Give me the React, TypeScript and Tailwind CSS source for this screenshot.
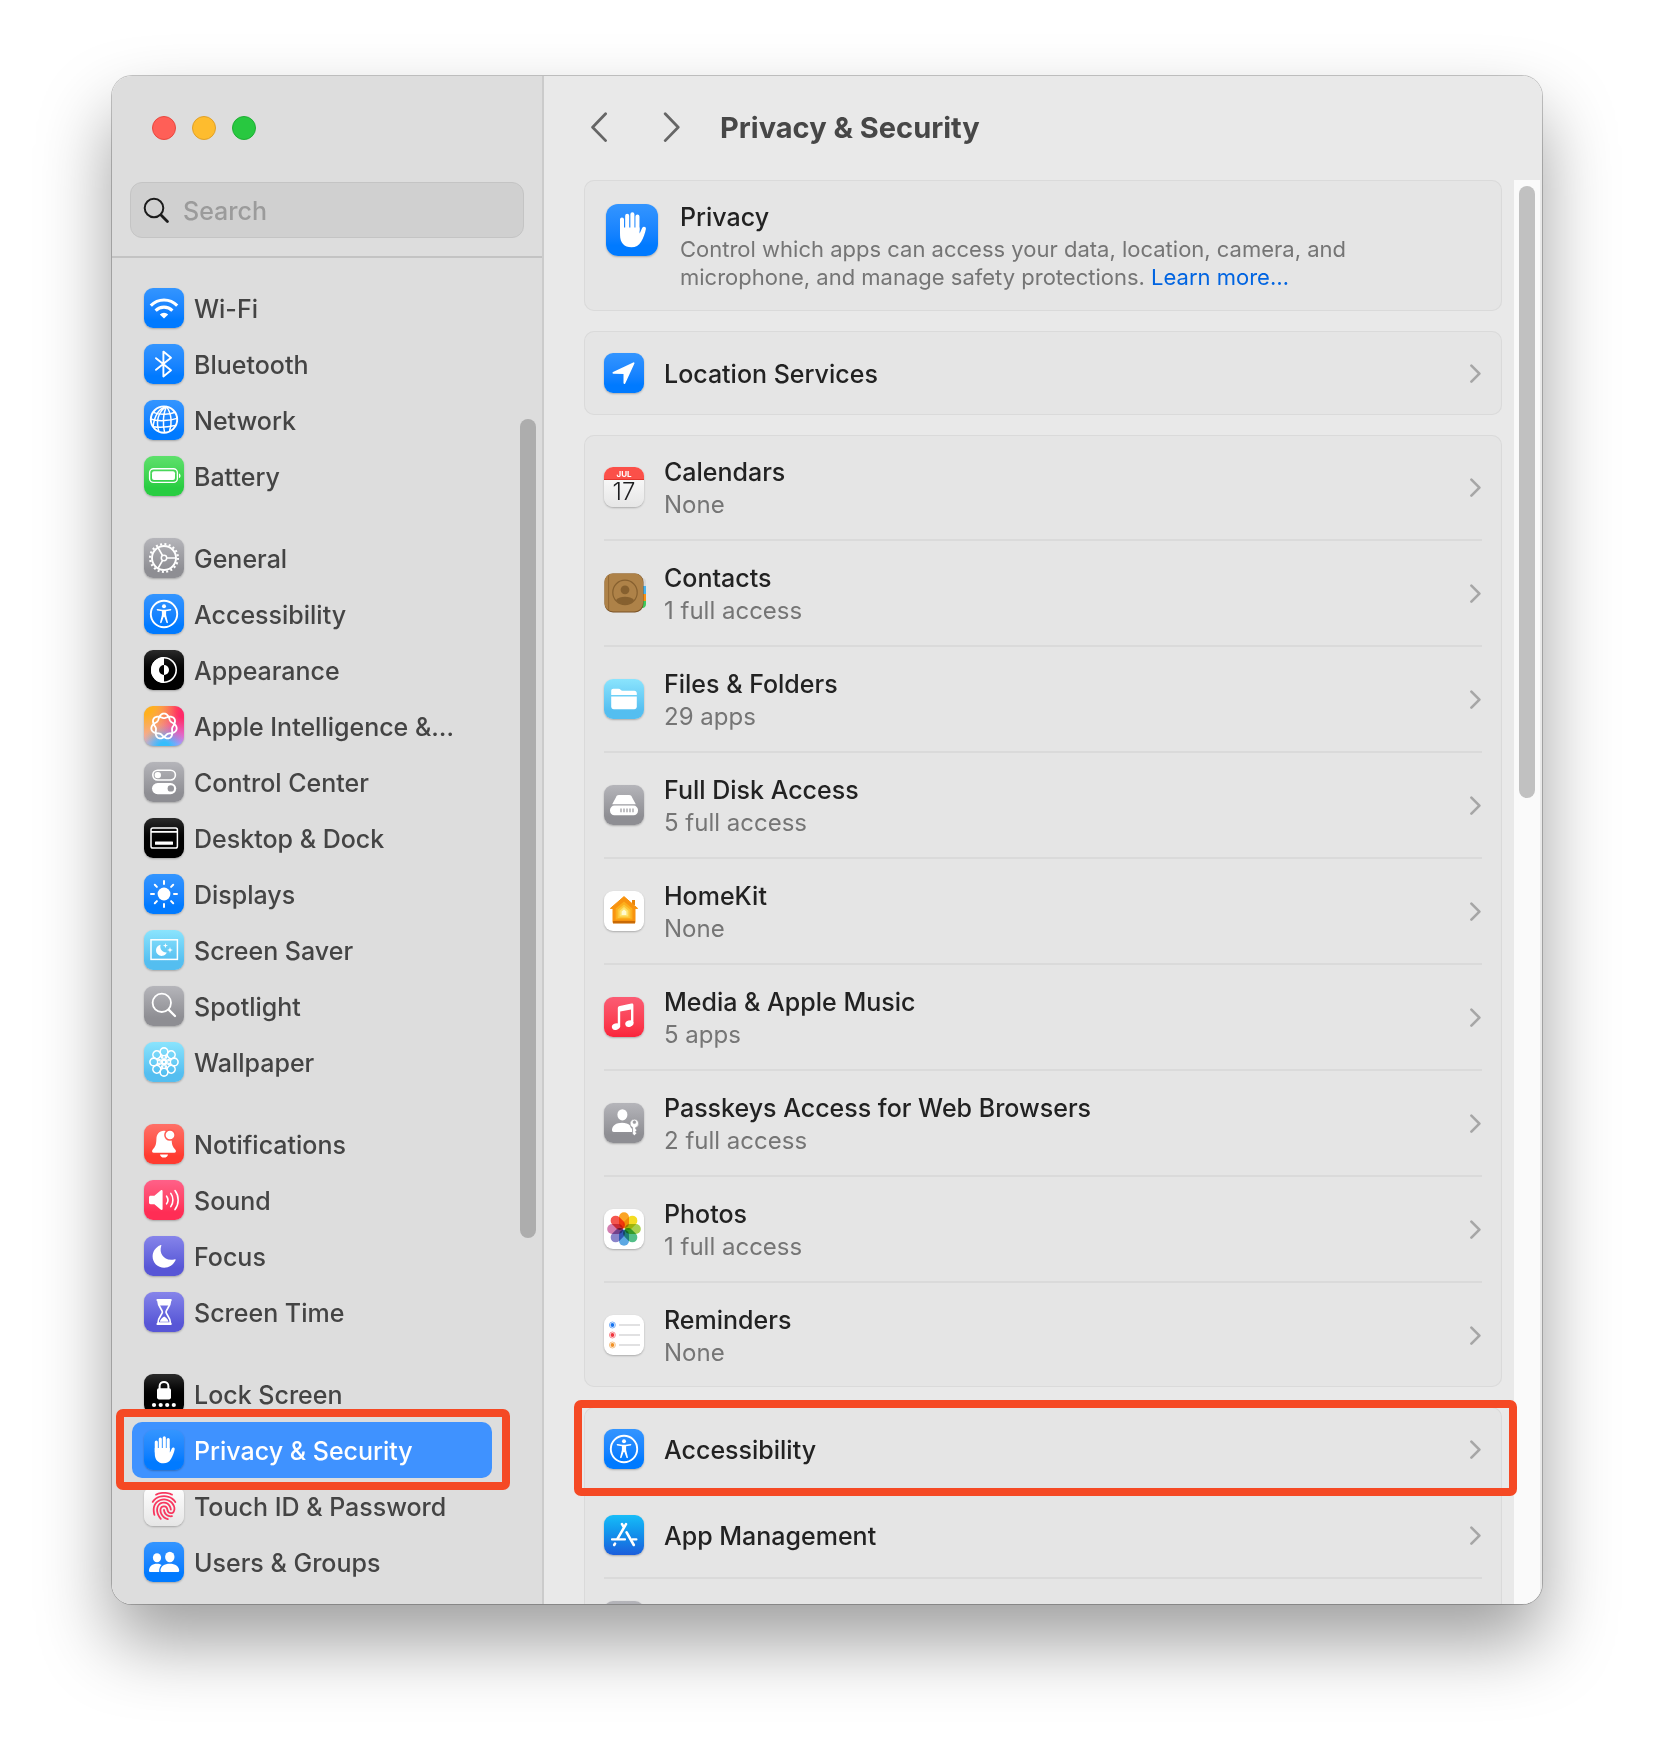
import React from "react";
import { IoFingerPrint } from "react-icons/io5";

interface SidebarItemData {
	name: string;
	tone: string;
	glyph: React.ReactNode;
	active?: boolean;
}

interface RowData {
	name: string;
	detail?: string;
	icon: React.ReactNode;
	highlighted?: boolean;
}

const tones: Record<string, string> = {
	blue: "bg-linear-to-b from-[#3395ff] to-[#007aff] to-80%",
	gray: "bg-linear-to-b from-[#b5b5ba] to-[#8e8e93] to-80%",
	black: "bg-linear-to-b from-[#2b2b2b] to-black to-70%",
	green: "bg-linear-to-b from-[#5de06b] to-[#28cd41] to-80%",
	cyan: "bg-linear-to-b from-[#8ae4fd] to-[#54bef0] to-80%",
	red: "bg-linear-to-b from-[#ff7067] to-[#ff3b30] to-80%",
	pink: "bg-linear-to-b from-[#ff6088] to-[#ff2d55] to-80%",
	purple: "bg-linear-to-b from-[#8684ea] to-[#5856d6] to-80%",
	light: "bg-linear-to-b from-white to-[#e6e6e6]",
	white: "bg-white",
	music: "bg-linear-to-b from-[#fb5c74] to-[#fa233b]",
	store: "bg-linear-to-b from-[#19bdf8] to-[#1c5ddb]",
	rainbow: "bg-[radial-gradient(circle_at_0%_0%,#ffb01e_15%,transparent_65%),radial-gradient(circle_at_100%_10%,#ff2a68_15%,transparent_65%),radial-gradient(circle_at_50%_105%,#35bdfc_12%,transparent_50%),radial-gradient(circle_at_100%_80%,#d58cff_20%,transparent_70%)] bg-[#f3a8b8]",
};

const Tile = ({ tone, glyph, large }: { tone: string; glyph: React.ReactNode; large?: boolean }) => (
	<span
		className={`${large ? "size-[52px] rounded-xl" : "size-10 rounded-[9px]"} ${tones[tone]} block shrink-0 overflow-hidden shadow-[0_1px_2px_rgba(0,0,0,0.25)]`}
	>
		<svg viewBox="0 0 40 40" className="size-full" fill="none" stroke="none" aria-hidden="true">
			{glyph}
		</svg>
	</span>
);

/* ---------- glyphs, all on a 40 x 40 grid ---------- */

const handGlyph = (
	<g>
		<path
			d="M12.3 12V22M16.3 9V20M20.3 7.8V20M24.2 9.6V20"
			stroke="#fff"
			strokeWidth="3.1"
			strokeLinecap="round"
		/>
		<path
			d="M10.8 18H25.8V22.6C26.6 21.4 27.2 19.6 27.8 18.4C28.6 16.9 31 17.4 30.7 19.2C30.1 22.4 28.6 26.4 27 29C25.2 31.9 22.9 33.3 19.6 33.3C14 33.3 10.8 29.6 10.8 24Z"
			fill="#fff"
		/>
	</g>
);

const accessibilityGlyph = (
	<g>
		<circle cx="20" cy="20" r="13.2" stroke="#fff" strokeWidth="1.9" />
		<circle cx="20" cy="12.3" r="2" fill="#fff" />
		<path d="M13.4 15.7L18.2 16.6H21.8L26.6 15.7" stroke="#fff" strokeWidth="1.5" strokeLinecap="round" strokeLinejoin="round" />
		<path d="M17.9 16.4H22.1V21L23.9 28.2C24.1 29.2 22.7 29.5 22.4 28.6L20.4 23H19.6L17.6 28.6C17.3 29.5 15.9 29.2 16.1 28.2L17.9 21Z" fill="#fff" />
	</g>
);

const wifiGlyph = (
	<g>
		<path d="M6.8 17.6A18.4 18.4 0 0 1 33.2 17.6" stroke="#fff" strokeWidth="3.1" />
		<path d="M11.6 22.6A11.8 11.8 0 0 1 28.4 22.6" stroke="#fff" strokeWidth="3.1" />
		<path d="M20 30.6L15.8 26.4A6 6 0 0 1 24.2 26.4Z" fill="#fff" />
	</g>
);

const bluetoothGlyph = (
	<path d="M12 14.2L27 26.2L19.4 32.4V7.6L27 13.8L12 25.8" stroke="#fff" strokeWidth="1.9" strokeLinecap="round" strokeLinejoin="round" />
);

const networkGlyph = (
	<g stroke="#fff" strokeWidth="1.5">
		<circle cx="20" cy="19.6" r="13.2" strokeWidth="1.9" />
		<path d="M22.6 6.6C14 11 11.6 22 15 31.8M22.6 6.6C19 13 18.6 24 20.6 32.8M22.6 6.6C27.8 14 28.2 24 25.4 31.6M22.6 6.6C18 7.6 11.2 11 9 27" />
		<path d="M9.4 12.4C16 15.4 25.6 14.6 31 12.2M6.8 19C14 21.8 26.4 20.6 33 18.4M9.2 26.8C16 27.8 25.6 26.8 31.4 25.6" />
	</g>
);

const batteryGlyph = (
	<g>
		<rect x="5.6" y="12.8" width="27.8" height="13.6" rx="4" stroke="#fff" strokeWidth="1.4" />
		<rect x="8" y="15.2" width="23" height="8.8" rx="2" fill="#fff" />
		<path d="M35 17.4C37 18 37 21.4 35 22Z" fill="#fff" />
	</g>
);

const gearGlyph = (
	<g stroke="#fff">
		<circle cx="20" cy="20" r="12" strokeWidth="1.9" />
		<circle cx="20" cy="20" r="13.9" strokeWidth="2.2" strokeDasharray="2 2.366" />
		<circle cx="20" cy="20" r="2.7" strokeWidth="1.5" />
		<path d="M22.7 20H32M18.6 17.7L14 9.6M18.6 22.3L14 30.4" strokeWidth="1.7" />
	</g>
);

const appearanceGlyph = (
	<g>
		<circle cx="20" cy="20" r="12.2" stroke="#fff" strokeWidth="1.6" />
		<path d="M20 7A13 13 0 0 0 20 33V25A5 5 0 0 1 20 15Z" fill="#fff" />
		<path d="M20 15A5 5 0 0 1 20 25Z" fill="#fff" />
	</g>
);

// closed seven lobed knot, the line goes twice around the centre
const knotPoints = Array.from({ length: 281 }, (_, i) => {
	const t = (i / 280) * Math.PI * 4;
	const r = 10.6 + 2.3 * Math.cos(3.5 * t);
	return `${(20 + r * Math.sin(t)).toFixed(2)},${(20.4 - r * Math.cos(t)).toFixed(2)}`;
}).join(" ");

const intelligenceGlyph = <polyline points={knotPoints} stroke="#fff" strokeWidth="1.8" strokeLinejoin="round" />;

const controlGlyph = (
	<g>
		<rect x="8.8" y="8.2" width="22.6" height="9.8" rx="4.9" stroke="#fff" strokeWidth="1.6" />
		<circle cx="13.8" cy="13.1" r="3.2" fill="#fff" />
		<rect x="8" y="21" width="24.2" height="11.2" rx="5.6" fill="#fff" />
		<circle cx="26.8" cy="26.4" r="3.2" fill="#96969b" />
	</g>
);

const dockGlyph = (
	<g>
		<rect x="7" y="10" width="26.4" height="20" rx="1.8" stroke="#fff" strokeWidth="1.5" />
		<path d="M7 13.8H33.4" stroke="#fff" strokeWidth="1.8" />
		<rect x="11" y="23.4" width="18" height="3.4" rx="0.6" fill="#fff" />
	</g>
);

const sunGlyph = (
	<g>
		<circle cx="20" cy="20" r="6.4" fill="#fff" />
		<path
			d="M20 7V10M20 30V33M7 20H10M30 20H33M10.8 10.8L12.9 12.9M27.1 27.1L29.2 29.2M10.8 29.2L12.9 27.1M27.1 12.9L29.2 10.8"
			stroke="#fff"
			strokeWidth="2"
			strokeLinecap="round"
		/>
	</g>
);

const screenSaverGlyph = (
	<g>
		<rect x="7" y="9.8" width="26.4" height="19.6" stroke="#fff" strokeWidth="1.5" />
		<path d="M16.6 14.8A5.6 5.6 0 1 0 22.8 22.4A5.8 5.8 0 0 1 16.6 14.8Z" fill="#fff" />
		<path d="M21.4 13L22 15L24 15.6L22 16.2L21.4 18.2L20.8 16.2L18.8 15.6L20.8 15ZM26 17L26.7 19.3L29 20L26.7 20.7L26 23L25.3 20.7L23 20L25.3 19.3Z" fill="#fff" />
	</g>
);

const spotlightGlyph = (
	<g stroke="#fff" strokeLinecap="round">
		<circle cx="17.8" cy="16.8" r="9.2" strokeWidth="1.8" />
		<path d="M24.6 23.6L31 30" strokeWidth="2.3" />
	</g>
);

const angles = [0, 45, 90, 135, 180, 225, 270, 315];

const wallpaperGlyph = (
	<g stroke="#fff" strokeWidth="1.6">
		{angles.map((a) => (
			<g key={a} transform={`rotate(${a} 20 20)`}>
				<circle cx="20" cy="9.8" r="3.9" />
				<path d="M20 18.4L17.6 13M20 18.4L22.4 13" strokeWidth="1.2" />
			</g>
		))}
		<circle cx="20" cy="20" r="1.8" />
	</g>
);

const bellGlyph = (
	<g>
		<path
			d="M20 6.8C14.8 6.8 12.6 10.6 12.4 15C12.2 20.6 11.6 22.4 8.6 25.8C7.6 27 8 28.8 9.8 28.8H30.2C32 28.8 32.4 27 31.4 25.8C28.4 22.4 27.8 20.6 27.6 15C27.4 10.6 25.2 6.8 20 6.8Z"
			fill="#fff"
		/>
		<path d="M16 30.4H24C23.8 32.4 22.2 33.6 20 33.6C17.8 33.6 16.2 32.4 16 30.4Z" fill="#fff" />
		<circle cx="26" cy="11" r="5.1" fill="#fff" stroke="#ff5a50" strokeWidth="1.5" />
	</g>
);

const soundGlyph = (
	<g>
		<path d="M5 17.4C5 16.4 5.6 15.8 6.6 15.8H10.4L16.6 10.4C17.6 9.6 18.6 10 18.6 11.2V28.8C18.6 30 17.6 30.4 16.6 29.6L10.4 24.2H6.6C5.6 24.2 5 23.6 5 22.6Z" fill="#fff" />
		<path d="M22.6 16.2C24.2 18.4 24.2 21.6 22.6 23.8M26.8 13.4C29.6 17.2 29.6 22.8 26.8 26.6M31 10.6C35.2 16 35.2 24 31 29.6" stroke="#fff" strokeWidth="1.6" strokeLinecap="round" />
	</g>
);

const moonGlyph = (
	<path d="M16.2 9.2C17.4 8.6 17.6 9 17.2 10C14.8 17.4 20 25.4 30.2 23.4C31.6 23.1 32 23.6 31.4 24.6C29.2 29 25.2 31.8 20.2 31.8C13.6 31.8 8.6 26.8 8.6 20.6C8.6 15.6 11.6 11.2 16.2 9.2Z" fill="#fff" />
);

const hourglassGlyph = (
	<g>
		<path d="M13.4 8H26.8M13.4 32H26.8" stroke="#fff" strokeWidth="2" strokeLinecap="round" />
		<path d="M14 9C14 15 18.4 17.4 18.4 20C18.4 22.6 14 25 14 31H26.4C26.4 25 22 22.6 22 20C22 17.4 26.4 15 26.4 9Z" stroke="#fff" strokeWidth="1.7" />
		<path d="M14 8H26.4L25.6 13.4H14.8Z" fill="#fff" />
		<path d="M20.2 24.6C18 26 16.4 27.4 15.8 29.8H24.6C24 27.4 22.4 26 20.2 24.6Z" fill="#fff" />
	</g>
);

const lockGlyph = (
	<g fill="#fff">
		<path d="M15.6 15.4V12.2C15.6 6.6 24.4 6.6 24.4 12.2V15.4" fill="none" stroke="#fff" strokeWidth="2" />
		<rect x="13" y="14.2" width="14" height="11.2" rx="1.8" />
		<circle cx="10" cy="31" r="2.1" />
		<circle cx="16.7" cy="31" r="2.1" />
		<circle cx="23.2" cy="31" r="2.1" />
		<circle cx="29.8" cy="31" r="2.1" />
	</g>
);

const fingerGlyph = <IoFingerPrint x="5" y="5" size={30} color="#f8385f" />;

const usersGlyph = (
	<g fill="#fff">
		<ellipse cx="13" cy="15.8" rx="4.1" ry="4.5" />
		<ellipse cx="25.8" cy="15" rx="4.7" ry="5.2" />
		<path d="M5 28.4C5.2 24.4 8.4 21.8 13 21.8C14.8 21.8 16.4 22.2 17.6 23C15.8 24.6 15 26.8 15.2 30H6.6C5.6 30 5 29.4 5 28.4Z" />
		<path d="M16.4 28.4C16.6 24.4 20.4 21.8 25.8 21.8C31.2 21.8 35 24.4 35.2 28.4C35.2 29.4 34.6 30 33.6 30H18C17 30 16.4 29.4 16.4 28.4Z" />
	</g>
);

const locationGlyph = (
	<path d="M29.6 10.2L20.4 30V20.2L9.4 19.8Z" fill="#fff" stroke="#fff" strokeWidth="1.8" strokeLinejoin="round" />
);

const calendarGlyph = (
	<g fontFamily="Inter, 'Liberation Sans', sans-serif" textAnchor="middle">
		<rect width="40" height="13" fill="#fb5049" />
		<rect y="12" width="40" height="1" fill="#e2352d" />
		<text x="20" y="9.6" fontSize="8" fontWeight="700" fill="#fff">JUL</text>
		<text x="20" y="33.2" fontSize="24" fontWeight="300" fill="#1d1d1f">17</text>
	</g>
);

const folderGlyph = (
	<g fill="#fff">
		<path d="M7.2 16V12C7.2 10.6 8 9.8 9.4 9.8H14.6C16.4 9.8 16.8 11.8 18.6 11.8H30.4C31.8 11.8 32.8 12.8 32.8 14.2V16Z" />
		<path d="M7.2 17.6H32.8V27.6C32.8 29.2 31.8 30.2 30.2 30.2H9.8C8.2 30.2 7.2 29.2 7.2 27.6Z" />
	</g>
);

const diskGlyph = (
	<g>
		<path d="M12 12.2C12.4 10.8 13.4 10 14.8 10H25.2C26.6 10 27.6 10.8 28 12.2L31.8 19.2H8.2Z" fill="#fff" />
		<rect x="6" y="20.6" width="28" height="9.6" rx="4.4" fill="#fff" />
		<path d="M17 23.4V27.2M20 23.4V27.2M23 23.4V27.2M26 23.4V27.2M29 23.4V27.2" stroke="#96969b" strokeWidth="1.2" />
	</g>
);

const homeGlyph = (
	<g strokeLinejoin="round">
		<path d="M28 9H31V14H28Z" fill="#e8860c" />
		<path d="M20 5.6L33.6 17.4H31V31.6H9V17.4H6.4Z" fill="#f8930f" stroke="#f8930f" strokeWidth="1" />
		<path d="M9 30H31V32.4H9Z" fill="#c96a05" />
		<path d="M20 10.4L28.4 17.6V28.4H11.6V17.6Z" fill="#fcae1c" />
		<path d="M20 13.4L26.4 18.8V27H13.6V18.8Z" fill="#fdc63a" />
		<path d="M20 16L24.4 19.8V25.6H15.6V19.8Z" fill="#fee36e" />
		<path d="M20 18.4L22.4 20.6V24H17.6V20.6Z" fill="#fffbd0" />
	</g>
);

const musicGlyph = (
	<g fill="#fff">
		<path d="M13.8 11.2C13.8 9.8 14.6 9.2 15.8 8.9L27.4 6.6C28.8 6.3 29.4 6.8 29.4 8.2V26H27V12.4L16.2 14.6V29.4H13.8Z" />
		<ellipse cx="12" cy="29.6" rx="4.2" ry="3.2" transform="rotate(-18 12 29.6)" />
		<ellipse cx="25.4" cy="26.6" rx="4.2" ry="3.2" transform="rotate(-18 25.4 26.6)" />
	</g>
);

const passkeyGlyph = (
	<g fill="#fff">
		<ellipse cx="18.4" cy="11.8" rx="5" ry="5.6" />
		<path d="M8 27C8 22.6 12.4 19.8 18 19.8C21.4 19.8 24.4 20.8 26 22.6C26.4 24.4 27.2 25.2 28 25.8V29H9.8C8.6 29 8 28.2 8 27Z" />
		<path
			fillRule="evenodd"
			d="M30.4 16.2A4.3 4.3 0 0 0 28.6 24.4V31L30.4 32.6L32.6 30.2L31.4 28.8L32.8 27.2L31.6 25.8V24.6A4.3 4.3 0 0 0 30.4 16.2ZM30.4 17.8A1.4 1.4 0 1 1 30.4 20.6A1.4 1.4 0 1 1 30.4 17.8Z"
			stroke="#98989d"
			strokeWidth="0.6"
		/>
	</g>
);

const petals = ["#fb9a0d", "#f3d90b", "#9ccb3b", "#3fb77a", "#4a9fe0", "#7d76c4", "#cd6fa8", "#f4433c"];

const photosGlyph = (
	<g>
		{petals.map((color, i) => (
			<rect
				key={color}
				x="15"
				y="3.2"
				width="10"
				height="16"
				rx="5"
				fill={color}
				opacity="0.9"
				transform={`rotate(${i * 45} 20 20)`}
				className="mix-blend-multiply"
			/>
		))}
	</g>
);

const reminderDots = [
	{ y: 10, color: "#1473f0" },
	{ y: 20, color: "#f0343c" },
	{ y: 30, color: "#f09126" },
];

const remindersGlyph = (
	<g>
		{reminderDots.map((dot) => (
			<g key={dot.y}>
				<circle cx="8.4" cy={dot.y} r="3" stroke={dot.color} strokeWidth="0.9" opacity="0.6" />
				<circle cx="8.4" cy={dot.y} r="1.9" fill={dot.color} />
				<path d={`M15 ${dot.y}H36`} stroke="#c4c4c6" strokeWidth="1.2" />
			</g>
		))}
	</g>
);

const storeGlyph = (
	<g stroke="#fff" strokeWidth="2.6" strokeLinecap="round">
		<path d="M22 9.2L13.6 23.6M18 9.2L19.8 12.2M22.6 17.4L29.8 30M11 28.6L10.2 30" />
		<path d="M8 24.4H21M28.4 24.4H32.4" strokeWidth="2.2" />
	</g>
);

const ContactsIcon = () => (
	<svg viewBox="0 0 42 40" className="-mr-[2px] h-10 w-[42px] shrink-0" fill="none" aria-hidden="true">
		<rect x="30" y="5" width="12" height="30" rx="4" fill="#d8d8d8" />
		<rect x="32" y="13" width="10" height="8" fill="#45b2ef" />
		<rect x="32" y="21" width="10" height="7" fill="#f79114" />
		<path d="M32 28H42V31C42 33 41 35 38 35H32Z" fill="#3ccb5b" />
		<rect x="0.5" y="0.5" width="39" height="39" rx="8.5" fill="#7b5326" />
		<rect x="0.5" y="0.5" width="38.5" height="38" rx="8.5" fill="#ae8248" />
		<path d="M4.6 2.2V37" stroke="#936833" strokeWidth="1" />
		<circle cx="21" cy="19.4" r="12.2" stroke="#86602f" strokeWidth="1.2" />
		<circle cx="21" cy="16.8" r="4.4" fill="#86602f" />
		<path d="M12 27C16 22.6 26 22.6 30 27C27.6 30 24.6 31.4 21 31.4C17.4 31.4 14.4 30 12 27Z" fill="#86602f" />
	</svg>
);

const sidebarGroups: SidebarItemData[][] = [
	[
		{ name: "Wi-Fi", tone: "blue", glyph: wifiGlyph },
		{ name: "Bluetooth", tone: "blue", glyph: bluetoothGlyph },
		{ name: "Network", tone: "blue", glyph: networkGlyph },
		{ name: "Battery", tone: "green", glyph: batteryGlyph },
	],
	[
		{ name: "General", tone: "gray", glyph: gearGlyph },
		{ name: "Accessibility", tone: "blue", glyph: accessibilityGlyph },
		{ name: "Appearance", tone: "black", glyph: appearanceGlyph },
		{ name: "Apple Intelligence &…", tone: "rainbow", glyph: intelligenceGlyph },
		{ name: "Control Center", tone: "gray", glyph: controlGlyph },
		{ name: "Desktop & Dock", tone: "black", glyph: dockGlyph },
		{ name: "Displays", tone: "blue", glyph: sunGlyph },
		{ name: "Screen Saver", tone: "cyan", glyph: screenSaverGlyph },
		{ name: "Spotlight", tone: "gray", glyph: spotlightGlyph },
		{ name: "Wallpaper", tone: "cyan", glyph: wallpaperGlyph },
	],
	[
		{ name: "Notifications", tone: "red", glyph: bellGlyph },
		{ name: "Sound", tone: "pink", glyph: soundGlyph },
		{ name: "Focus", tone: "purple", glyph: moonGlyph },
		{ name: "Screen Time", tone: "purple", glyph: hourglassGlyph },
	],
	[
		{ name: "Lock Screen", tone: "black", glyph: lockGlyph },
		{ name: "Privacy & Security", tone: "blue", glyph: handGlyph, active: true },
		{ name: "Touch ID & Password", tone: "light", glyph: fingerGlyph },
		{ name: "Users & Groups", tone: "blue", glyph: usersGlyph },
	],
];

const appRows: RowData[] = [
	{ name: "Calendars", detail: "None", icon: <Tile tone="light" glyph={calendarGlyph} /> },
	{ name: "Contacts", detail: "1 full access", icon: <ContactsIcon /> },
	{ name: "Files & Folders", detail: "29 apps", icon: <Tile tone="cyan" glyph={folderGlyph} /> },
	{ name: "Full Disk Access", detail: "5 full access", icon: <Tile tone="gray" glyph={diskGlyph} /> },
	{ name: "HomeKit", detail: "None", icon: <Tile tone="white" glyph={homeGlyph} /> },
	{ name: "Media & Apple Music", detail: "5 apps", icon: <Tile tone="music" glyph={musicGlyph} /> },
	{ name: "Passkeys Access for Web Browsers", detail: "2 full access", icon: <Tile tone="gray" glyph={passkeyGlyph} /> },
	{ name: "Photos", detail: "1 full access", icon: <Tile tone="white" glyph={photosGlyph} /> },
	{ name: "Reminders", detail: "None", icon: <Tile tone="white" glyph={remindersGlyph} /> },
];

const systemRows: RowData[] = [
	{ name: "Accessibility", icon: <Tile tone="blue" glyph={accessibilityGlyph} />, highlighted: true },
	{ name: "App Management", icon: <Tile tone="store" glyph={storeGlyph} /> },
	{ name: "", icon: <Tile tone="gray" glyph={null} /> },
];

const SidebarItem = ({ item }: { item: SidebarItemData }) => (
	<li className="relative">
		<button
			type="button"
			aria-current={item.active ? "page" : undefined}
			className={`flex h-14 w-full items-center gap-[10px] rounded-[10px] px-3 text-left text-[25px] whitespace-nowrap ${item.active ? "bg-[#3f92ff] text-white" : "text-[#444444]"}`}
		>
			<Tile tone={item.tone} glyph={item.glyph} />
			<span className="pt-[3px]">{item.name}</span>
		</button>
		{item.active && (
			<span className="pointer-events-none absolute -top-[13px] -right-[18px] -bottom-3 -left-4 z-10 rounded-[7px] border-8 border-[#f54924]" />
		)}
	</li>
);

const Card = ({ children }: { children: React.ReactNode }) => (
	<section className="rounded-[10px] bg-[#e5e5e5] inset-ring inset-ring-[#dadada]">{children}</section>
);

const Row = ({ row, last }: { row: RowData; last: boolean }) => (
	<li className="relative px-5">
		<button
			type="button"
			aria-label={row.name || "More"}
			className={`flex w-full items-center gap-5 text-left ${row.detail ? "h-[104px]" : "h-[84px]"}`}
		>
			{row.icon}
			<span className="flex-1 pt-[2px]">
				<span className="block text-[25px] leading-[34px] text-[#222222]">{row.name}</span>
				{row.detail && <span className="block text-2xl leading-8 font-normal text-[#757575]">{row.detail}</span>}
			</span>
			<svg viewBox="0 0 12 20" className="h-5 w-3 shrink-0" fill="none" aria-hidden="true">
				<path d="M1.4 2.6L9.4 10.6L1.4 18.6" stroke="#a6a6a6" strokeWidth="2.6" strokeLinecap="round" strokeLinejoin="round" />
			</svg>
		</button>
		{!last && <div className="h-[2px] bg-[#dadada]" />}
		{row.highlighted && (
			<span className="pointer-events-none absolute -top-[7px] -right-[15px] -bottom-[3px] -left-[10px] z-10 rounded-[7px] border-8 border-[#f54924]" />
		)}
	</li>
);

const Rows = ({ rows }: { rows: RowData[] }) => (
	<Card>
		<ul>
			{rows.map((row, i) => (
				<Row key={row.name} row={row} last={i === rows.length - 1} />
			))}
		</ul>
	</Card>
);

const Sidebar = () => (
	<aside className="flex w-[432px] shrink-0 flex-col border-r-2 border-[#cbcbcb] bg-[#dddddd]">
		<div className="flex h-[106px] items-center gap-4 px-10 pb-[2px]">
			<button type="button" aria-label="Close" className="size-6 rounded-full border border-[#e8483f] bg-[#ff5f57]" />
			<button type="button" aria-label="Minimize" className="size-6 rounded-full border border-[#e0a028] bg-[#febc2e]" />
			<button type="button" aria-label="Zoom" className="size-6 rounded-full border border-[#1fae34] bg-[#28c840]" />
		</div>
		<label className="mx-[18px] mb-[18px] flex h-14 items-center gap-[14px] rounded-xl border border-[#c4c4c4] bg-[#d0d0d0] px-3">
			<svg viewBox="0 0 26 26" className="size-[26px] shrink-0" fill="none" stroke="#1c1c1c" strokeLinecap="round" aria-hidden="true">
				<circle cx="11" cy="11" r="9.3" strokeWidth="2" />
				<path d="M18 18L24.4 24.4" strokeWidth="2.8" />
			</svg>
			<input
				type="text"
				aria-label="Search"
				placeholder="Search"
				className="w-full bg-transparent pt-[3px] text-[25px] text-[#222222] outline-none placeholder:text-[#9b9b9b]"
			/>
		</label>
		<div className="h-[2px] shrink-0 bg-[#c3c3c3]" />
		<div className="flex min-h-0 flex-1 pr-[6px] pl-5">
			<nav className="flex flex-1 flex-col gap-[26px] pt-[22px] pr-7">
				{sidebarGroups.map((group, i) => (
					<ul key={i}>
						{group.map((item) => (
							<SidebarItem key={item.name} item={item} />
						))}
					</ul>
				))}
			</nav>
			<div className="mt-[161px] h-[819px] w-4 rounded-full bg-[#adadad]" />
		</div>
	</aside>
);

const App: React.FC = () => {
	return (
		<div className="h-screen overflow-hidden bg-white px-28 pt-[76px] pb-[148px] font-['Inter','Liberation_Sans',sans-serif] font-[450]">
			<div className="h-full rounded-[20px] shadow-[0_0_0_1px_rgba(0,0,0,0.22),0_38px_72px_rgba(0,0,0,0.38)]">
				<div className="flex h-full overflow-hidden rounded-[20px] bg-[#e9e9e9]">
					<Sidebar />
					<main className="flex min-w-0 flex-1 flex-col">
						<header className="flex h-[104px] shrink-0 items-center pl-[46px]">
							<button type="button" aria-label="Back" className="h-8 w-5">
								<svg viewBox="0 0 20 32" className="h-8 w-5" fill="none" stroke="#666666" strokeWidth="2.8" strokeLinecap="round" strokeLinejoin="round">
									<path d="M15.6 1.8L2.6 15.2L15.6 28.6" />
								</svg>
							</button>
							<button type="button" aria-label="Forward" className="ml-[52px] h-8 w-5">
								<svg viewBox="0 0 20 32" className="h-8 w-5" fill="none" stroke="#666666" strokeWidth="2.8" strokeLinecap="round" strokeLinejoin="round">
									<path d="M3.2 1.8L16.2 15.2L3.2 28.6" />
								</svg>
							</button>
							<h1 className="ml-[38px] text-[29px] font-bold text-[#474747]">Privacy &amp; Security</h1>
						</header>
						<div className="flex min-h-0 flex-1 pr-[2px]">
							<div className="flex min-w-0 flex-1 flex-col gap-5 pr-3 pl-10">
								<Card>
									<div className="flex gap-[22px] px-[22px] py-5">
										<span className="pt-1">
											<Tile tone="blue" glyph={handGlyph} large />
										</span>
										<div>
											<h2 className="mb-px text-[25px] leading-[34px] text-[#222222]">Privacy</h2>
											<p className="max-w-[700px] text-[22px] leading-7 font-normal text-[#757575]">
												Control which apps can access your data, location, camera, and microphone, and manage safety protections.{" "}
												<a href="#learn-more" className="text-[#0064e1]">Learn more…</a>
											</p>
										</div>
									</div>
								</Card>
								<Rows rows={[{ name: "Location Services", icon: <Tile tone="blue" glyph={locationGlyph} /> }]} />
								<Rows rows={appRows} />
								<Rows rows={systemRows} />
							</div>
							<div className="w-[26px] shrink-0 bg-[#fafafa] pt-[6px]">
								<div className="mx-auto h-[612px] w-4 rounded-full bg-[#c1c1c1]" />
							</div>
						</div>
					</main>
				</div>
			</div>
		</div>
	);
};

export default App;
